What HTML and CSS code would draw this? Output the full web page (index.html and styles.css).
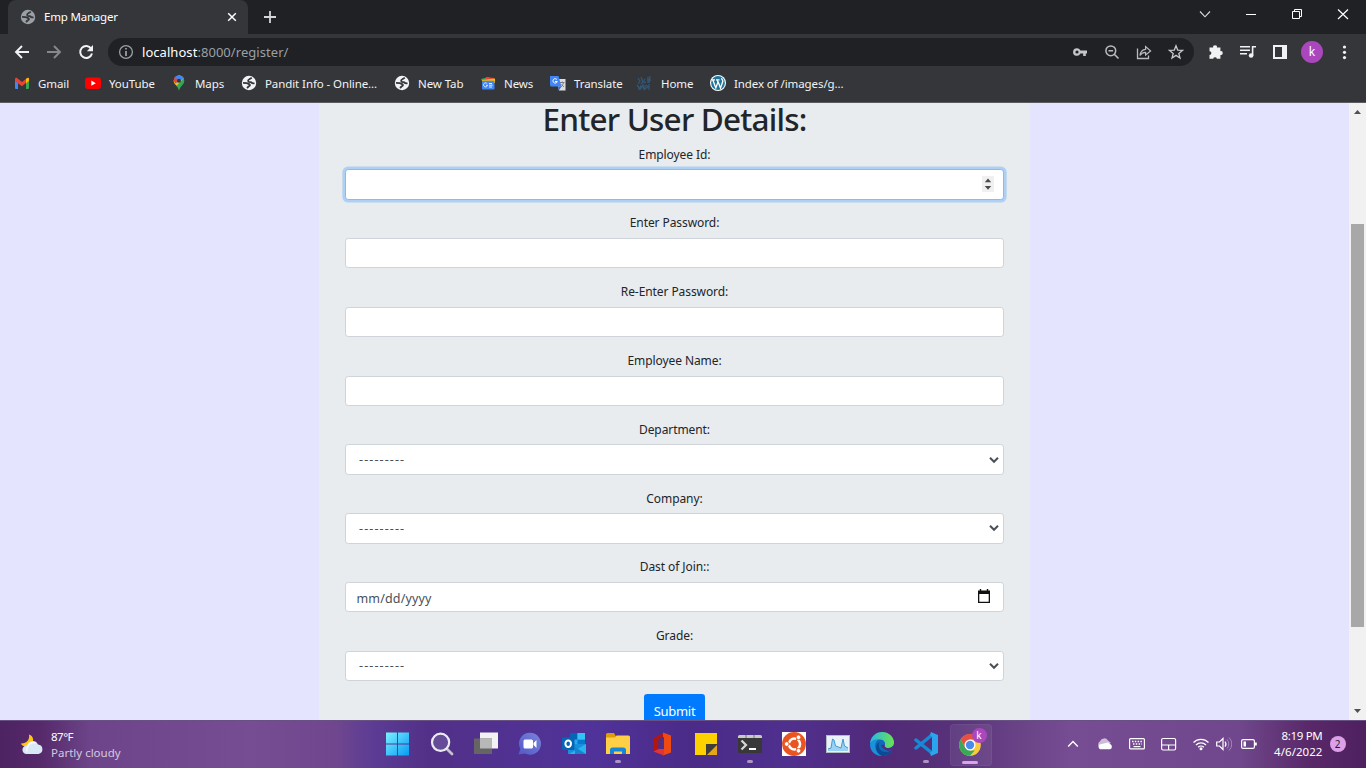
FILE: index.html
```html
<!DOCTYPE html>
<html lang="en">
<head>
<meta charset="utf-8">
<title>Emp Manager</title>
<link rel="stylesheet" href="styles.css">
</head>
<body>
<svg class="defs" width="0" height="0">
  <symbol id="globe" viewBox="0 0 16 16"><circle cx="8" cy="8" r="7.2" fill="currentColor"/><path d="M10.800 2.800 8.300 4.300C6.800 5 6.800 6.300 8 6.800l2.300.5c.6 1 1.600 1.300 3.200.9M2 7.800l3.800.400c1 .300 2 .800 2.800 1.200.800.600.300 1.300-.8 1.900l-1.800 1.700" fill="none" stroke="var(--hole)" stroke-width="1.800"/></symbol>
  <symbol id="chevron" viewBox="0 0 10 8"><path d="M1 1.800 5 5.800 9 1.800" fill="none" stroke="#495057" stroke-width="2"/></symbol>
</svg>
<div class="screen">
  <header class="tabstrip">
    <div class="tab">
      <svg class="tab-icon" width="16" height="16"><use href="#globe"/></svg>
      <span class="tab-title">Emp Manager</span>
      <svg width="10" height="10" viewBox="0 0 10 10"><path d="M1.2 1.2 8.8 8.8M8.8 1.2 1.2 8.8" stroke="#fff" stroke-width="1.5"/></svg>
    </div>
    <svg class="new-tab" width="12" height="12" viewBox="0 0 12 12"><path d="M6 0V12M0 6H12" stroke="#d5d6d8" stroke-width="1.8"/></svg>
    <div class="window-buttons">
      <svg width="46" height="34" viewBox="0 0 46 34"><path d="M18 11.5 23 16.8 28 11.5" fill="none" stroke="#ddd" stroke-width="1.1"/></svg>
      <svg width="46" height="34" viewBox="0 0 46 34"><path d="M18 14.5H28" stroke="#fff"/></svg>
      <svg width="46" height="34" viewBox="0 0 46 34"><path d="M18.5 11.5h7v7h-7zM20.5 11.5v-2h7v7h-2" fill="none" stroke="#fff"/></svg>
      <svg width="46" height="34" viewBox="0 0 46 34"><path d="M18 9.5 28 19M28 9.5 18 19" stroke="#fff" stroke-width="1.2"/></svg>
    </div>
  </header>

  <nav class="toolbar">
    <div class="nav-buttons">
      <svg width="16" height="16" viewBox="0 0 16 16"><path d="M15 8H2M8 2 2 8l6 6" fill="none" stroke="#f1f2f3" stroke-width="1.9"/></svg>
      <svg width="16" height="16" viewBox="0 0 16 16"><path d="M1 8H14M8 2l6 6-6 6" fill="none" stroke="#86888b" stroke-width="1.9"/></svg>
      <svg width="16" height="16" viewBox="0 0 16 16"><path d="M13.2 4.6A6 6 0 1 0 14 9.6" fill="none" stroke="#f1f2f3" stroke-width="2"/><path d="M15 1v6.2H8.8z" fill="#f1f2f3"/></svg>
    </div>
    <div class="omnibox">
      <svg width="16" height="16" viewBox="0 0 16 16"><circle cx="8" cy="8" r="6.4" fill="none" stroke="#9aa0a6" stroke-width="1.3"/><path d="M8 7V12M8 4V5.6" stroke="#b4b7bb" stroke-width="1.5"/></svg>
      <span class="url"><b>localhost</b>:8000/register/</span>
      <div class="omni-actions">
        <svg width="16" height="16" viewBox="0 0 16 16"><path fill-rule="evenodd" d="M5 4.2a3.8 3.8 0 0 1 3.400 2.200H15v3h-1.200V12h-2.600V9.400H8.400A3.800 3.800 0 1 1 5 4.200zM5 6.400a1.600 1.600 0 1 0 0 3.200 1.600 1.600 0 0 0 0-3.200z" fill="#c4c6c9"/></svg>
        <svg width="16" height="16" viewBox="0 0 16 16"><circle cx="6.8" cy="6.8" r="4.900" fill="none" stroke="#b9bbbe" stroke-width="1.5"/><path d="M4.500 6.800H9.100M10.300 10.300 14.500 14.500" stroke="#b9bbbe" stroke-width="1.6"/></svg>
        <svg width="16" height="16" viewBox="0 0 16 16"><path d="M1.5 4.5V14.5H12.5V11.5" fill="none" stroke="#b9bbbe" stroke-width="1.3"/><path d="M4 11.5C4.4 7.5 6.5 5.6 9.6 5.3V2.6L14.6 7 9.6 11V8.3C7.2 8.2 5.4 9.1 4 11.5z" fill="none" stroke="#b9bbbe" stroke-width="1.2"/></svg>
        <svg width="16" height="16" viewBox="0 0 16 16"><path d="m8 1.800 1.700 4.300 4.800.300-3.700 3 1.200 4.600L8 11.400 4 14l1.200-4.600-3.700-3 4.800-.300z" fill="none" stroke="#c8c9cb" stroke-width="1.3"/></svg>
      </div>
    </div>
    <div class="ext-buttons">
      <svg width="16" height="16" viewBox="0 0 16 16"><path d="M1.500 3.500H5.200a1.900 1.900 0 1 1 3.700 0h3.500v3.700a1.900 1.900 0 1 1 0 3.700v3.800H8.900a1.900 1.900 0 0 0-3.700 0H1.500V11a1.900 1.900 0 0 0 0-3.800z" fill="#f1f2f3"/></svg>
      <svg width="16" height="16" viewBox="0 0 16 16"><path d="M0 2.800H10M0 6.300H10M0 9.800H7M12.600 11.500V2.800H16" fill="none" stroke="#f1f2f3" stroke-width="1.6"/><circle cx="11.1" cy="11.500" r="2.300" fill="#f1f2f3"/></svg>
      <svg width="16" height="16" viewBox="0 0 16 16"><path fill-rule="evenodd" d="M1 1H15V15H1zM3 3V13H10V3z" fill="#f1f2f3"/></svg>
      <span class="avatar">k</span>
      <svg width="16" height="16" viewBox="0 0 16 16" fill="#f1f2f3"><circle cx="8.500" cy="3" r="1.600"/><circle cx="8.500" cy="8.300" r="1.600"/><circle cx="8.500" cy="13.600" r="1.600"/></svg>
    </div>
  </nav>

  <nav class="bookmarks">
    <span class="bookmark"><svg width="16" height="16" viewBox="0 0 16 16"><path d="M1 4.5h3V14H2a1 1 0 0 1-1-1z" fill="#4285f4"/><path d="M12 5h3v8a1 1 0 0 1-1 1h-2z" fill="#34a853"/><path d="M1 4c0-1 1-1.800 2-1l5 4 5-4 0 4-5 4.200L1 6z" fill="#ea4335"/><path d="M12 4 13.300 3C14.300 2.400 15 3 15 4v1.800l-3 2.400z" fill="#fbbc04"/></svg>Gmail</span>
    <span class="bookmark"><svg width="16" height="16" viewBox="0 0 16 16"><rect y="2.500" width="16" height="11.500" rx="3" fill="#f00"/><path d="m6.300 5.600 4.500 2.600-4.500 2.600z" fill="#fff"/></svg>YouTube</span>
    <span class="bookmark"><svg width="16" height="16" viewBox="0 0 16 16"><path d="M8 .5a5.300 5.300 0 0 1 5.300 5.300C13.300 9.500 9.500 10.500 8 15.700 6.700 10.500 2.700 9.500 2.700 5.800A5.300 5.300 0 0 1 8 .5z" fill="#34a853"/><path d="M4 2.300A5.300 5.300 0 0 1 12.700 3.300L5.800 10.800C4 9 2.700 8 2.700 5.800z" fill="#fbbc04"/><path d="M4 2.300A5.300 5.300 0 0 1 12.900 3.700L8 5.800 6 8 2.800 6C2.700 4.500 3.200 3.200 4 2.300z" fill="#4285f4"/><path d="M4 2.300 7 5 4.500 8.500C3 7 2.300 4.300 4 2.300z" fill="#ea4335"/><circle cx="8" cy="5.800" r="2" fill="#35363a"/></svg>Maps</span>
    <span class="bookmark"><svg width="16" height="16"><use href="#globe"/></svg>Pandit Info - Online...</span>
    <span class="bookmark"><svg width="16" height="16"><use href="#globe"/></svg>New Tab</span>
    <span class="bookmark"><svg width="16" height="16" viewBox="0 0 16 16"><path d="m1 4 8-2 1 4H2z" fill="#34a853"/><path d="m6 2 8 1-1 5H5z" fill="#ea4335"/><path d="M2 5 15 3.500V8H3z" fill="#fbbc04"/><rect x="2" y="5.800" width="12.500" height="8.700" rx="1" fill="#4285f4"/><path d="M7.200 8.800A2 2 0 1 0 7.500 10.300H6M9 8.500H12M9 10.200H12.500M9 12H12" fill="none" stroke="#e4edff"/></svg>News</span>
    <span class="bookmark"><svg width="16" height="16" viewBox="0 0 16 16"><path d="M6 4h9.500v11.500H9z" fill="#dcdde0"/><path d="M0 1h8.500l3 10.500H1.500A1.500 1.500 0 0 1 0 10z" fill="#4285f4"/><path d="m8.800 15.500 2.700-4H8z" fill="#3367d6"/><path d="M7 4.700A2.200 2.200 0 1 0 7.300 6.500H5" fill="none" stroke="#fff"/><path d="M10 7.500h4.500M12.300 6.500v1M13.500 7.500C13 10 12 11 11 12M11.500 9.500 14 12" fill="none" stroke="#71757a" stroke-width=".9"/></svg>Translate</span>
    <span class="bookmark home"><svg width="16" height="16" viewBox="0 0 16 16"><path d="M2 3 4 6 2 9M5 2 7 7 5 9M9 4C7 5 8 9 10 7M12 2v6M14 1l-1 7M1 10l3 4 1-4M2 14c3 1 4-2 5-4l1 5M9 10v4l3-2-2-2M13 9v6M11 5h4" fill="none" stroke="#315675" stroke-width="1.300"/></svg>Home</span>
    <span class="bookmark"><svg width="16" height="16" viewBox="0 0 16 16"><circle cx="8" cy="8" r="8" fill="#fff"/><circle cx="8" cy="8" r="6.900" fill="#21759b"/><path d="M2.800 5 5.800 13 8 7 7 4.600M8 6.500 10.500 13 12.800 6.500C13 5 11.500 4.500 11.700 3.200M2 4.800H5M6 4.800H9.500" fill="none" stroke="#fff" stroke-width="1.300"/></svg>Index of /images/g...</span>
  </nav>

  <main class="viewport">
    <div class="page">
      <form class="card">
        <h1>Enter User Details:</h1>
        <div class="group"><label>Employee Id:</label><div class="control focused"><span></span>
          <svg class="spinner" width="12" height="16" viewBox="0 0 12 16"><rect width="12" height="16" fill="#f0f0f0"/><path d="M2.800 6.200 6 2.500 9.200 6.200zM2.800 10H9.200L6 13.700z" fill="#4a4a4a"/></svg></div></div>
        <div class="group"><label>Enter Password:</label><input class="control" type="password"></div>
        <div class="group"><label>Re-Enter Password:</label><input class="control" type="password"></div>
        <div class="group"><label>Employee Name:</label><input class="control" type="text"></div>
        <div class="group"><label>Department:</label><div class="control select"><span>---------</span><svg width="10" height="8"><use href="#chevron"/></svg></div></div>
        <div class="group"><label>Company:</label><div class="control select"><span>---------</span><svg width="10" height="8"><use href="#chevron"/></svg></div></div>
        <div class="group"><label>Dast of Join::</label><div class="control date"><span>mm/dd/yyyy</span><svg width="14" height="14" viewBox="0 0 14 14"><path fill-rule="evenodd" d="M1 1.500H13V14H1zM2.300 5V12.700H11.700V5z" fill="#111"/><path d="M3.500 0V2M10.500 0V2" stroke="#111" stroke-width="1.400"/></svg></div></div>
        <div class="group"><label>Grade:</label><div class="control select"><span>---------</span><svg width="10" height="8"><use href="#chevron"/></svg></div></div>
        <button class="submit" type="button">Submit</button>
      </form>
    </div>
    <div class="scrollbar">
      <svg width="17" height="17" viewBox="0 0 17 17"><path d="M5 11 8.500 7 12 11z" fill="#505050"/></svg>
      <div class="thumb"></div>
      <svg width="17" height="17" viewBox="0 0 17 17"><path d="M5 6 8.500 10 12 6z" fill="#505050"/></svg>
    </div>
  </main>

  <footer class="taskbar">
    <div class="weather">
      <svg width="24" height="24" viewBox="0 0 24 24"><path d="M9 1.500C14 3 14.500 9 10.500 12 7 14.500 2.500 14 .8 10.500 6 11 10 7 9 1.500z" fill="#ffc414"/><path d="M6.500 21a4.200 4.200 0 0 1 .3-8.400A6 6 0 0 1 18 11.500a4.800 4.800 0 0 1 .5 9.500z" fill="#d8e8f4"/><path d="M7 18.500A4.500 4.500 0 0 1 8 13.500 5.500 5.500 0 0 1 15.500 10" fill="none" stroke="#f5faff" stroke-width="1.500"/></svg>
      <div class="weather-text"><span class="temp">87°F</span><span class="sky">Partly cloudy</span></div>
    </div>
    <div class="apps">
      <span class="app"><svg width="24" height="24" viewBox="0 0 24 24"><defs><linearGradient id="win" x1="0" y1="0" x2="1" y2="1"><stop stop-color="#7cf0ff"/><stop offset="1" stop-color="#079bf5"/></linearGradient></defs><path d="M0 .500H11V11.500H0zM12 .500H23V11.500H12zM0 12.500H11V23.500H0zM12 12.500H23V23.500H12z" fill="url(#win)"/></svg></span>
      <span class="app"><svg width="24" height="24" viewBox="0 0 24 24"><path d="m17 17 5 5" stroke="#c4c2cb" stroke-width="2.800" stroke-linecap="round"/><circle cx="10.600" cy="10.300" r="8.600" fill="#8e83b955" stroke="#eceaf1" stroke-width="2.200"/></svg></span>
      <span class="app"><svg width="24" height="24" viewBox="0 0 24 24"><rect x="6" y=".5" width="18" height="16" fill="#f2f2f2"/><rect y="6.500" width="18" height="15.500" fill="#656565"/><path d="M6 6.500H18V16.500H6z" fill="#b8b8b8"/></svg></span>
      <span class="app"><svg width="24" height="24" viewBox="0 0 24 24"><defs><linearGradient id="chat" x1="1" y1="0" x2="0" y2="1"><stop stop-color="#7b83d8"/><stop offset="1" stop-color="#5059c9"/></linearGradient></defs><path d="M12 .700a11 11 0 1 1-5 20.800L.500 22.500 2.300 17A11 11 0 0 1 12 .700z" fill="url(#chat)"/><rect x="5.500" y="7.500" width="9.500" height="9" rx="1.500" fill="#fff"/><path d="m15.500 11 3-3v8l-3-3z" fill="#fff"/></svg></span>
      <span class="app"><svg width="24" height="24" viewBox="0 0 24 24"><path d="M8 1H23V14H8z" fill="#28a8ea"/><path d="M8 1h7.500v6.500H8z" fill="#0364b8"/><path d="M15.500 7.500H23V14H15.500z" fill="#0a78cf"/><path d="M15.500 1H23V7.500H15.500z" fill="#32c4f5"/><path d="M6 12 24 12V22H6z" fill="#1490df"/><path d="m7 22 17-10v10z" fill="#29b3ed"/><path d="m13 15 11 7H13z" fill="#1683d0"/><rect y="5.500" width="12.500" height="12.500" rx="1" fill="#0a64b5"/><ellipse cx="6.200" cy="11.700" rx="2.800" ry="3.300" fill="none" stroke="#fff" stroke-width="2"/></svg></span>
      <span class="app running"><svg width="24" height="24" viewBox="0 0 24 24"><path d="M0 2.500A1.500 1.500 0 0 1 1.500 1H8l2 3.500H23V8H0z" fill="#df9d0b"/><path d="M0 5.500h9l1.500-2H22.500A1.500 1.500 0 0 1 24 5V22H0z" fill="#ffcf45"/><path d="M4 22V18a2.500 2.500 0 0 1 2.500-2.500h11A2.500 2.500 0 0 1 20 18v4h-4v-2.500H8V22z" fill="#1686d6"/></svg></span>
      <span class="app"><svg width="24" height="24" viewBox="0 0 24 24"><path d="M3 6.500 14 .500v4L8.500 7v10l-5 2.500z" fill="#b5160b"/><path d="m13 .500 8 3v17l-8 3z" fill="#ef4a13"/><path d="M3.500 19.500 8.500 17H14v6.500z" fill="#e33338"/><path d="M8.500 7 14 5v12H8.500z" fill="#512d86"/></svg></span>
      <span class="app"><svg width="24" height="24" viewBox="0 0 24 24"><path d="M1 1H23V12L12 23H1z" fill="#fdd100"/><path d="M12 12H23V13L13 23H12z" fill="#3e3d3a"/><path d="M23 13V23H13z" fill="#e4a717"/></svg></span>
      <span class="app running"><svg width="24" height="24" viewBox="0 0 24 24"><rect y="3" width="24" height="18" rx="1.500" fill="#383838"/><path d="M0 6V4.500A1.500 1.500 0 0 1 1.500 3H22.500A1.500 1.500 0 0 1 24 4.500V6z" fill="#c9c9c9"/><path d="M8 3V6M16 3V6" stroke="#777"/><path d="m3.500 8.500 4.500 4.500-4.500 4.500" fill="none" stroke="#d6d6d6" stroke-width="2.200"/><path d="M11 17H18" stroke="#fff" stroke-width="2"/></svg></span>
      <span class="app"><svg width="24" height="24" viewBox="0 0 24 24"><path d="M0 0H24V24H0z" fill="#fff"/><circle cx="12" cy="12" r="11.900" fill="#e95420"/><circle cx="12.500" cy="12" r="5.600" fill="none" stroke="#fff" stroke-width="2.500"/><path d="M12.500 12H4M12.500 12 16.500 4.500M12.500 12 16.500 19.500" stroke="#e95420" stroke-width="1.500"/><g fill="#fff" stroke="#e95420" stroke-width=".8"><circle cx="4.700" cy="12" r="2.300"/><circle cx="16.500" cy="5.300" r="2.300"/><circle cx="16.500" cy="18.700" r="2.300"/></g></svg></span>
      <span class="app"><svg width="24" height="24" viewBox="0 0 24 24"><rect x=".5" y="3.500" width="23" height="17" fill="#e9f2f8" stroke="#b7bcc1"/><path d="M2 17 5 16 6.500 7 8 8 9.500 14 12.500 15 15 16 17 7 18.500 14 22 16V19H2z" fill="#9bd2f3"/><path d="M2 17 5 16 6.500 7 8 8 9.500 14 12.500 15 15 16 17 7 18.500 14 22 16" fill="none" stroke="#3c9bd3"/></svg></span>
      <span class="app"><svg width="24" height="24" viewBox="0 0 24 24"><defs><linearGradient id="edge" x2="1"><stop stop-color="#26b7ea"/><stop offset="1" stop-color="#6be34e"/></linearGradient></defs><circle cx="12" cy="12" r="12" fill="#1068bd"/><path d="M0 11.500C.8 4.500 6 0 12 0c8 0 12 6 12 10.500 0 3.500-3 5.500-6 5.500-3.500 0-4-2-3.200-3C16 11 14 7.500 10 7.500 5 7.500 1 10 0 11.500z" fill="url(#edge)"/><path d="M.1 12.500C1 8 5 7 8.500 7.500c-3 2-4 5-3 9C6.500 20 9 23 12 24 5 24 0 19 .1 12.500z" fill="#1a91d8"/><path d="M9.500 10C7.500 14 10 20 15.500 20c3 0 5.500-1 7-2.500C20 22 16 24 12 24 4 20 5 12 9.500 10z" fill="#0a4c94"/><path d="M15 12.500c-1 1.500 0 3.500 3.500 3.500 2 0 4-.8 5-2.500L24 18l-1.500.300C17 20 12 17 11 13z" fill="#512d80"/></svg></span>
      <span class="app running"><svg width="24" height="24" viewBox="0 0 24 24"><path d="M2 8 18 21M2 16 18 3" stroke="#168ad6" stroke-width="3.500" stroke-linecap="round"/><path d="m17 0 7 3v18l-7 3-1-3 2-2V5l-2-2z" fill="#29a4ed"/></svg></span>
      <span class="app active"><svg width="24" height="24" viewBox="0 0 24 24"><circle cx="12" cy="13" r="10.800" fill="#fbc82f"/><path d="M2.600 7.600A10.800 10.800 0 0 1 21.400 7.600H12L7.300 15.700z" fill="#e44335"/><path d="M2.600 7.600 7.300 15.700 12 18.400h4.700L12 23.800A10.800 10.800 0 0 1 2.600 7.600z" fill="#2aa34b"/><circle cx="12" cy="13" r="5.500" fill="#fff"/><circle cx="12" cy="13" r="4.200" fill="#3e83ec"/></svg><i class="badge">k</i></span>
    </div>
    <div class="tray">
      <svg width="12" height="16" viewBox="0 0 12 16"><path d="m1.200 10.500 4.800-5 4.800 5" fill="none" stroke="#fff" stroke-width="1.400"/></svg>
      <svg width="16" height="16" viewBox="0 0 16 16"><path d="M2.500 11A3.500 3.500 0 0 1 3 5.200 4.500 4.500 0 0 1 11 4.500L14 7z" fill="#cdbdd9"/><path d="M3 13.300A3 3 0 0 1 2.500 8.500L11 6.500a4 4 0 0 1 2 1.500 2.800 2.800 0 0 1 0 5.300z" fill="#fff"/></svg>
      <svg width="16" height="16" viewBox="0 0 16 16"><rect x=".6" y="2.600" width="14.800" height="10.300" rx="1" fill="none" stroke="#fff" stroke-width="1.200"/><path d="M3 5.500H13.500M4 8H13" stroke="#fff" stroke-width="1.500" stroke-dasharray="1.500 1.300"/><path d="M4.500 10.600H11.500" stroke="#fff" stroke-width="1.200"/></svg>
      <svg width="16" height="16" viewBox="0 0 16 16"><rect x=".6" y="2.500" width="14" height="11.500" rx="1.500" fill="none" stroke="#fff" stroke-width="1.200"/><path d="M.6 9H14.600M7.600 9V14" stroke="#fff" stroke-width="1.200"/></svg>
      <svg width="16" height="16" viewBox="0 0 16 16"><path d="M.5 6.500a10.500 10.500 0 0 1 15 0M3 9a7 7 0 0 1 10 0M5.200 11.300a4 4 0 0 1 5.600 0" fill="none" stroke="#fff" stroke-width="1.300"/><circle cx="8" cy="12.800" r="1.500" fill="#fff"/></svg>
      <svg width="16" height="16" viewBox="0 0 16 16"><path d="M.7 6H3.500L7 2.500V13.500L3.500 10H.7z" fill="none" stroke="#fff" stroke-width="1.200"/><path d="M9 5.500a4 4 0 0 1 0 5" fill="none" stroke="#fff" stroke-width="1.200"/><path d="M11 3.500a6.500 6.500 0 0 1 0 9M13 1.500a9 9 0 0 1 0 13" fill="none" stroke="#a486b8"/></svg>
      <svg width="16" height="16" viewBox="0 0 16 16"><rect x=".6" y="3.600" width="12.800" height="8.800" rx="1.500" fill="none" stroke="#fff" stroke-width="1.200"/><path d="M2.500 5.500H5V10.500H2.500zM13.500 6.500H15.800V9.500H13.500z" fill="#fff"/></svg>
    </div>
    <div class="clock"><span class="time">8:19 PM</span><span class="day">4/6/2022</span></div>
    <span class="notice">2</span>
  </footer>
</div>
</body>
</html>
```
FILE: styles.css
```css
* { box-sizing: border-box; }
body { margin: 0; font-family: "Noto Sans", "Open Sans", sans-serif; overflow: hidden; }
.defs { display: none; }
.screen { width: 1366px; height: 768px; display: flex; flex-direction: column; overflow: hidden; }
svg { flex: none; display: block; }

.tabstrip { height: 34px; flex: none; background: #202124; display: flex; padding-left: 8px; }
.tab { width: 240px; height: 34px; border-radius: 8px 8px 0 0; background: #35363a; display: flex; align-items: center; padding: 0 11px 0 12px; color: #fff; }
.tab-icon { color: #9aa0a6; --hole: #35363a; }
.tab-title { font-size: 11.5px; letter-spacing: -.2px; margin: -2px 0 0 8px; flex: 1; white-space: nowrap; }
.new-tab { margin: 11px 0 0 16px; }
.window-buttons { margin-left: auto; display: flex; }

.toolbar { height: 34px; flex: none; background: #35363a; display: flex; align-items: center; padding-top: 1px; }
.nav-buttons { width: 108px; display: flex; gap: 16px; padding-left: 14px; }
.omnibox { width: 1086px; height: 28px; border-radius: 14px; background: #202124; display: flex; align-items: center; padding: 0 10px; }
.url { margin-left: 8px; color: #9aa0a6; font-size: 13px; letter-spacing: .05px; }
.url b { font-weight: 400; color: #fff; }
.omni-actions { margin-left: auto; display: flex; gap: 16px; }
.ext-buttons { display: flex; align-items: center; padding-left: 14px; gap: 16px; }
.avatar { width: 22px; height: 22px; margin: 0 -3px; border-radius: 50%; background: #ab47bc; color: #fff; font-size: 12px; line-height: 21px; text-align: center; }

.bookmarks { height: 35px; flex: none; background: #35363a; border-bottom: 1px solid #5b5c60; padding: 0 0 4px 14px; display: grid; grid-template-columns: 71px 86px 70px 153px 86px 70px 86px 74px 150px; align-items: center; color: #f1f3f4; font-size: 11.5px; --hole: #35363a; }
.bookmark { display: flex; align-items: center; gap: 8px; white-space: nowrap; letter-spacing: -.09px; }
.home { gap: 9px; }

.viewport { height: 617px; flex: none; display: flex; overflow: hidden; background: #e4e4ff; }
.page { width: 1349px; display: flex; justify-content: center; }
.card { width: 711px; height: 660px; padding: 0 26px; background: #e8ecef; text-align: center; color: #212529; }
h1 { margin: 0 0 6.2px; height: 34.400px; font-size: 31.500px; line-height: 32px; font-weight: 500; letter-spacing: -.8px; }
.group { margin-bottom: 12.800px; height: 56px; }
label { display: block; height: 19.200px; margin-bottom: 6.400px; font-size: 12px; line-height: 22px; letter-spacing: -.08px; }
.control { display: flex; align-items: center; width: 100%; height: 30.400px; border: 1px solid #ced4da; border-radius: 3.200px; background: #fff; color: #495057; padding: 0 9.600px; font-family: inherit; font-size: 12.500px; }
.focused { border-color: #80bdff; box-shadow: 0 0 0 2.600px #007bff40; justify-content: space-between; }
.spinner { margin-right: -1px; }
.select { justify-content: space-between; padding: 0 4px 0 13px; }
.select span { letter-spacing: 1.100px; }
.date { justify-content: space-between; padding: 0 12.500px 0 10.500px; }
.date span { padding-top: 3px; letter-spacing: .15px; }
.date svg { margin-top: -3px; }
.submit { width: 61px; height: 31px; border: 0; border-radius: 3.200px; background: #007bff; color: #fff; font: 13px/31px "Noto Sans", sans-serif; letter-spacing: -.3px; padding: 2px 0 0; }
.scrollbar { width: 17px; background: #f1f1f1; display: flex; flex-direction: column; justify-content: space-between; }
.thumb { width: 13px; height: 403px; margin: 104px 0 76px 2px; background: #a8a8a8; }

.taskbar { height: 48px; flex: none; border-top: 1px solid #684f84; display: flex; align-items: center; color: #fff; background: linear-gradient(90deg, #4e2362 0, #55296a 40px, #6d4489 90px, #764c92 250px, #70478f 335px, #5b3b94 375px, #523088 430px, #50339a 590px, #4b2b88 690px, #50308e 790px, #512978 880px, #573179 950px, #6a4387 1020px, #764c92 1070px, #70478c 1240px, #582869 1310px, #4f2060 1366px); }
.weather { width: 376px; padding-left: 20px; display: flex; align-items: center; }
.weather-text { margin-left: 7px; display: flex; flex-direction: column; font-size: 11.500px; line-height: 16px; }
.sky { color: #d6c8df; }
.temp { letter-spacing: -.5px; }
.apps { display: flex; }
.app { position: relative; width: 44px; height: 47px; display: flex; justify-content: center; align-items: center; }
.app svg { margin-top: -1px; }
.running::after { content: ""; position: absolute; left: 17px; bottom: 5px; width: 6px; height: 3px; border-radius: 2px; background: #ad94c4; margin-left: 2px; }
.active::before { content: ""; position: absolute; left: 2px; top: 3px; width: 40px; height: 40px; border-radius: 4px; background: #ffffff12; border: 1px solid #ffffff0c; }
.active::after { content: ""; position: absolute; left: 14px; bottom: 4px; width: 16px; height: 3px; border-radius: 2px; background: #dba2e7; }
.badge { position: absolute; left: 24px; top: 7px; width: 15px; height: 15px; border-radius: 50%; background: #ab47bc; font: 10px/14px "Noto Sans", sans-serif; text-align: center; }
.apps { margin-left: -.5px; }
.tray { width: 192px; margin-left: 75px; padding-bottom: 1px; display: grid; grid-template-columns: 30px 32px 32px 32px 23px 25px 17px; align-items: center; }
.clock { width: 64px; display: flex; flex-direction: column; align-items: flex-end; font-size: 11.500px; line-height: 16px; padding-bottom: 1px; }
.day { letter-spacing: .05px; }
.time { letter-spacing: -.3px; }
.notice { width: 16px; height: 16px; margin-left: 7px; margin-top: -1px; border-radius: 50%; background: #dda0e8; color: #222; font-size: 10px; line-height: 16px; text-align: center; }
```
